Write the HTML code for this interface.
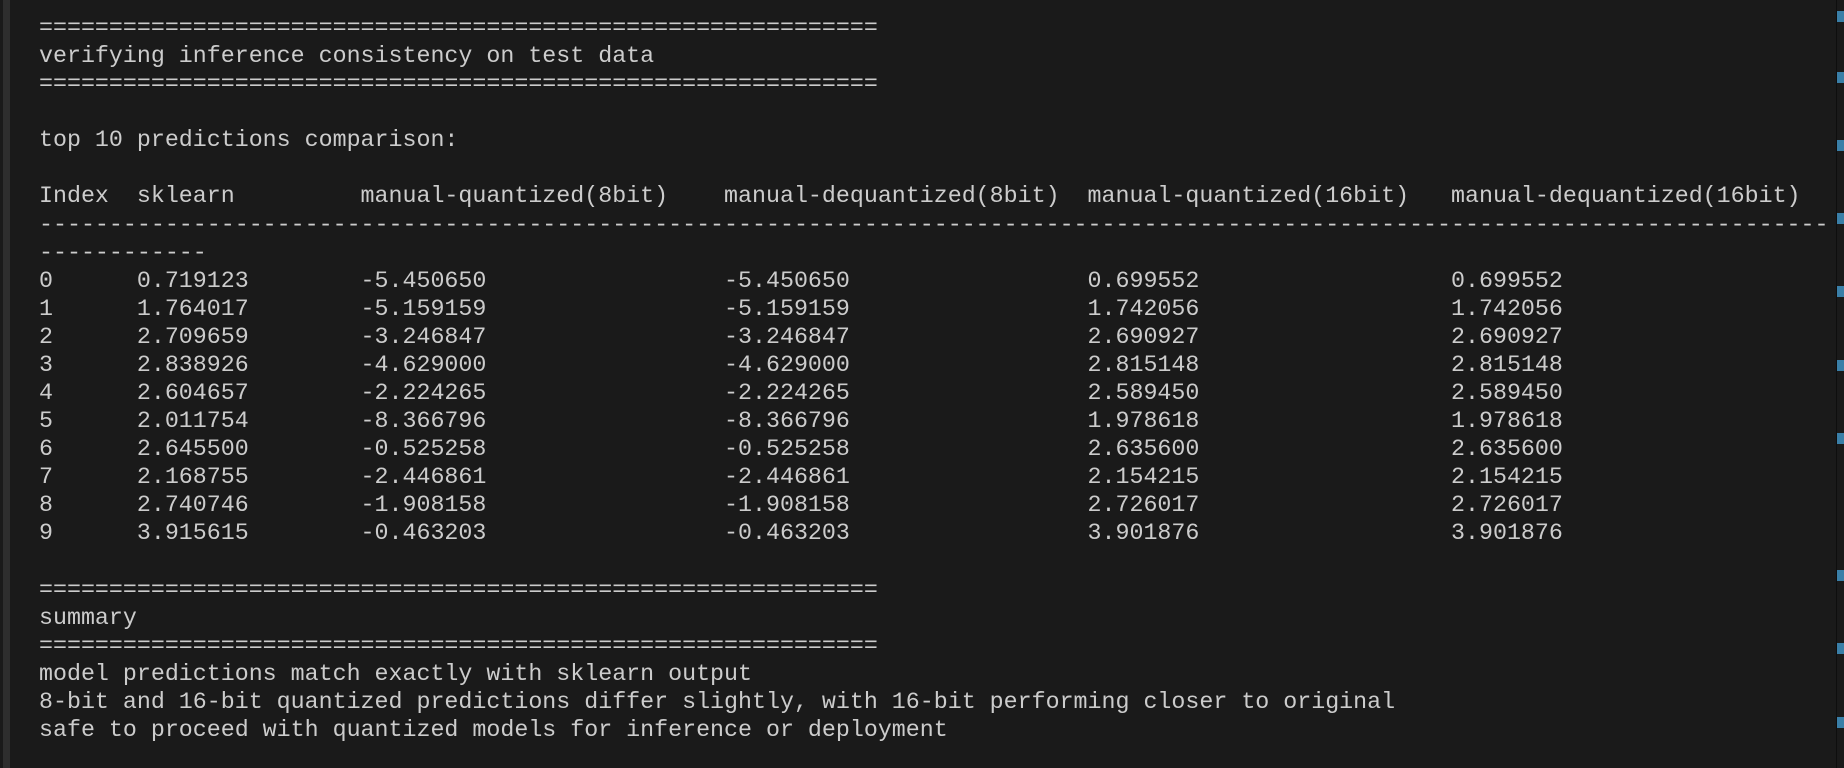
<!DOCTYPE html>
<html><head><meta charset="utf-8"><style>
html,body{margin:0;padding:0;background:#1a1a1a;width:1844px;height:768px;overflow:hidden;position:relative}
.bar{position:absolute;left:3px;top:0;width:7px;height:768px;background:#2e2e2e}
.sb{position:absolute;left:1836px;top:0;width:1px;height:768px;background:#0e0e0e}
.m{position:absolute;left:1837px;width:7px;height:11px;background:#3a7fa8}
pre{position:absolute;left:39px;top:14px;margin:0;font-family:"Liberation Mono",monospace;font-size:23.3px;line-height:28.08px;color:#cccccc;white-space:pre}
</style></head><body>
<div class="bar"></div><div class="sb"></div>
<div class="m" style="top:11px"></div><div class="m" style="top:72px"></div><div class="m" style="top:140px"></div><div class="m" style="top:213px"></div><div class="m" style="top:286px"></div><div class="m" style="top:360px"></div><div class="m" style="top:433px"></div><div class="m" style="top:570px"></div><div class="m" style="top:643px"></div><div class="m" style="top:717px"></div>
<pre>============================================================
verifying inference consistency on test data
============================================================

top 10 predictions comparison:

Index  sklearn         manual-quantized(8bit)    manual-dequantized(8bit)  manual-quantized(16bit)   manual-dequantized(16bit)
--------------------------------------------------------------------------------------------------------------------------------
------------
0      0.719123        -5.450650                 -5.450650                 0.699552                  0.699552
1      1.764017        -5.159159                 -5.159159                 1.742056                  1.742056
2      2.709659        -3.246847                 -3.246847                 2.690927                  2.690927
3      2.838926        -4.629000                 -4.629000                 2.815148                  2.815148
4      2.604657        -2.224265                 -2.224265                 2.589450                  2.589450
5      2.011754        -8.366796                 -8.366796                 1.978618                  1.978618
6      2.645500        -0.525258                 -0.525258                 2.635600                  2.635600
7      2.168755        -2.446861                 -2.446861                 2.154215                  2.154215
8      2.740746        -1.908158                 -1.908158                 2.726017                  2.726017
9      3.915615        -0.463203                 -0.463203                 3.901876                  3.901876

============================================================
summary
============================================================
model predictions match exactly with sklearn output
8-bit and 16-bit quantized predictions differ slightly, with 16-bit performing closer to original
safe to proceed with quantized models for inference or deployment</pre>
</body></html>
